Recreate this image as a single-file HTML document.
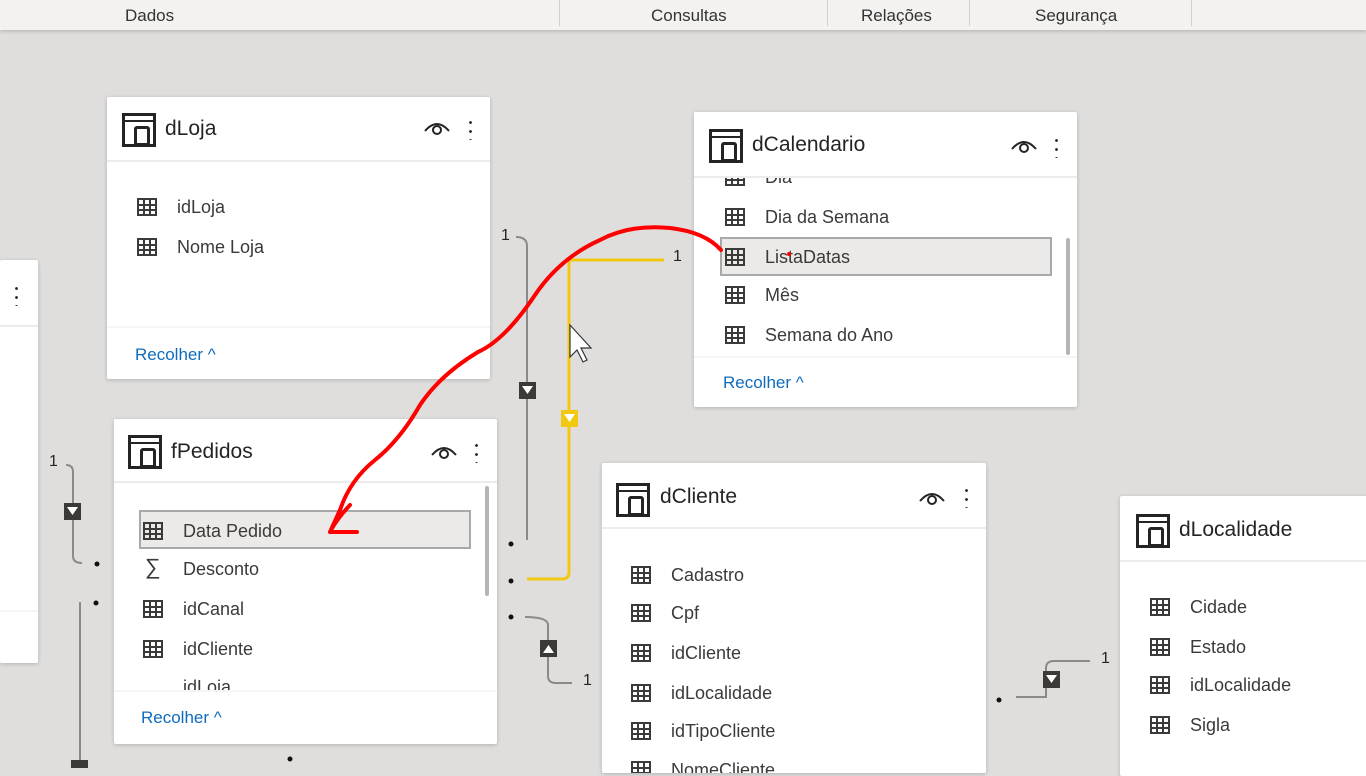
<!DOCTYPE html>
<html><head><meta charset="utf-8"><style>
*{margin:0;padding:0;box-sizing:border-box}
body{width:1366px;height:768px;overflow:hidden;background:#dfdedd;font-family:"Liberation Sans",sans-serif;position:relative}
.top{position:absolute;left:0;top:0;width:1366px;height:30px;background:#f3f2f1;box-shadow:0 2px 3px rgba(0,0,0,.15);font-size:17px;color:#333}
.top span{position:absolute;top:6px}
.top i{position:absolute;top:0;width:1px;height:26px;background:#d0d0d0}
.card{position:absolute;background:#fff;box-shadow:0 1px 4px rgba(0,0,0,.2);border-radius:2px;overflow:hidden}
.hd{position:absolute;left:0;right:0;top:0;border-bottom:2px solid #ececec}
.ti{position:absolute;font-size:21px;color:#252423}
.tic{position:absolute;width:34px;height:34px;border:3px solid #252423}
.tic:before{content:"";position:absolute;left:0;right:0;top:4px;height:2px;background:#252423}
.tic:after{content:"";position:absolute;left:9px;top:10px;width:10px;height:14px;border:3px solid #252423;border-radius:3px 3px 0 0}
.eye{position:absolute;width:26px;height:14px}
.dots{position:absolute;width:3px;height:22px;background:radial-gradient(circle,#252423 1.2px,transparent 1.6px) 0 0/3px 9px repeat-y}
.f{position:absolute;font-size:18px;color:#3b3a39;height:22px;line-height:22px}
.f b{position:absolute;left:-40px;top:2px;width:20px;height:18px;border:2px solid #3b3a39;background:
linear-gradient(#3b3a39,#3b3a39) 4px 0/2px 100% no-repeat,
linear-gradient(#3b3a39,#3b3a39) 0 4px/100% 2px no-repeat,
linear-gradient(#3b3a39,#3b3a39) 0 9px/100% 2px no-repeat,
linear-gradient(#3b3a39,#3b3a39) 10px 0/2px 100% no-repeat}
.sel{position:absolute;background:#ebeae9;border:2px solid #a9a9a9}
.ft{position:absolute;left:0;right:0;border-top:2px solid #f5f5f5}
.rc{position:absolute;font-size:17px;color:#0f6cbd}
.sb{position:absolute;width:4px;background:#b5b5b5;border-radius:2px}
.lbl{position:absolute;font-size:16px;color:#252423}
</style></head><body>
<div class="top">
<span style="left:125px">Dados</span><i style="left:559px"></i>
<span style="left:651px">Consultas</span><i style="left:827px"></i>
<span style="left:861px">Relações</span><i style="left:969px"></i>
<span style="left:1035px">Segurança</span><i style="left:1191px"></i>
</div>

<div class="card" style="left:0;top:260px;width:38px;height:403px">
<div class="hd" style="height:67px"></div>
<div class="dots" style="left:15px;top:24px"></div>
<div class="ft" style="top:350px"></div>
</div>

<svg width="1366" height="768" style="position:absolute;left:0;top:0">
<g fill="none" stroke="#8a8a8a" stroke-width="2">
<path d="M516 237 Q527 237 527 246 V540"/>
<path d="M66 465 Q73 465 73 472 V556 Q73 563 82 563"/>
<path d="M80 602 V768"/>
<path d="M525 617 Q548 617 548 625 V676 Q548 683 556 683 H572"/>
<path d="M1016 697 H1046 V668 Q1046 661 1054 661 H1090"/>
</g>
<path d="M664 260 H569 V572 Q569 579 562 579 H527" fill="none" stroke="#f2c811" stroke-width="3"/>
<rect x="519" y="382" width="17" height="17" fill="#3b3a39"/><path d="M522 386 h11 l-5.5 8z" fill="#fff"/>
<rect x="561" y="410" width="17" height="17" fill="#f2c811"/><path d="M564 414 h11 l-5.5 8z" fill="#fff"/>
<rect x="64" y="503" width="17" height="17" fill="#3b3a39"/><path d="M67 507 h11 l-5.5 8z" fill="#fff"/>
<rect x="540" y="640" width="17" height="17" fill="#3b3a39"/><path d="M543 653 h11 l-5.5 -8z" fill="#fff"/>
<rect x="1043" y="671" width="17" height="17" fill="#3b3a39"/><path d="M1046 675 h11 l-5.5 8z" fill="#fff"/>
<rect x="71" y="760" width="17" height="10" fill="#3b3a39"/>
<g fill="#111"><circle cx="511" cy="544" r="2.5"/><circle cx="511" cy="581" r="2.5"/><circle cx="511" cy="617" r="2.5"/><circle cx="97" cy="564" r="2.5"/><circle cx="96" cy="603" r="2.5"/><circle cx="999" cy="700" r="2.5"/><circle cx="290" cy="759" r="2.5"/></g>
<path d="M570 325 V357 L577 350 L583 362 L587 360 L581 348 L591 348 Z" fill="#fff" stroke="#333" stroke-width="1.2"/>
</svg>
<div class="lbl" style="left:501px;top:227px">1</div>
<div class="lbl" style="left:673px;top:248px">1</div>
<div class="lbl" style="left:49px;top:453px">1</div>
<div class="lbl" style="left:583px;top:672px">1</div>
<div class="lbl" style="left:1101px;top:650px">1</div>

<div class="card" style="left:107px;top:97px;width:383px;height:282px">
<div class="hd" style="height:65px"></div>
<div class="tic" style="left:15px;top:16px"></div>
<div class="ti" style="left:58px;top:20px">dLoja</div>
<svg class="eye" style="left:317px;top:24px" viewBox="0 0 26 14"><path d="M1 10 Q13 -4 25 10" fill="none" stroke="#252423" stroke-width="2"/><circle cx="13" cy="9" r="4" fill="none" stroke="#252423" stroke-width="2"/></svg>
<div class="dots" style="left:362px;top:21px"></div>
<div class="f" style="left:70px;top:99px"><b></b>idLoja</div>
<div class="f" style="left:70px;top:139px"><b></b>Nome Loja</div>
<div class="ft" style="top:229px"></div>
<div class="rc" style="left:28px;top:248px">Recolher ^</div>
</div>

<div class="card" style="left:694px;top:112px;width:383px;height:295px">
<div class="f" style="left:71px;top:54px"><b></b>Dia</div>
<div class="hd" style="height:66px;background:#fff"></div>
<div class="tic" style="left:15px;top:17px"></div>
<div class="ti" style="left:58px;top:21px">dCalendario</div>
<svg class="eye" style="left:317px;top:27px" viewBox="0 0 26 14"><path d="M1 10 Q13 -4 25 10" fill="none" stroke="#252423" stroke-width="2"/><circle cx="13" cy="9" r="4" fill="none" stroke="#252423" stroke-width="2"/></svg>
<div class="dots" style="left:361px;top:24px"></div>
<div class="f" style="left:71px;top:94px"><b></b>Dia da Semana</div>
<div class="sel" style="left:26px;top:125px;width:332px;height:39px"></div>
<div class="f" style="left:71px;top:134px"><b></b>ListaDatas</div>
<div class="f" style="left:71px;top:172px"><b></b>Mês</div>
<div class="f" style="left:71px;top:212px"><b></b>Semana do Ano</div>
<div class="sb" style="left:372px;top:126px;height:117px"></div>
<div class="ft" style="top:244px"></div>
<div class="rc" style="left:29px;top:261px">Recolher ^</div>
</div>

<div class="card" style="left:114px;top:419px;width:383px;height:325px">
<div class="hd" style="height:64px"></div>
<div class="tic" style="left:14px;top:16px"></div>
<div class="ti" style="left:57px;top:21px">fPedidos</div>
<svg class="eye" style="left:317px;top:26px" viewBox="0 0 26 14"><path d="M1 10 Q13 -4 25 10" fill="none" stroke="#252423" stroke-width="2"/><circle cx="13" cy="9" r="4" fill="none" stroke="#252423" stroke-width="2"/></svg>
<div class="dots" style="left:361px;top:22px"></div>
<div class="sel" style="left:25px;top:91px;width:332px;height:39px"></div>
<div class="f" style="left:69px;top:101px"><b></b>Data Pedido</div>
<div class="f" style="left:69px;top:139px"><span style="position:absolute;left:-38px;top:-2px;font-size:22px">∑</span>Desconto</div>
<div class="f" style="left:69px;top:179px"><b></b>idCanal</div>
<div class="f" style="left:69px;top:219px"><b></b>idCliente</div>
<div class="f" style="left:69px;top:257px;height:14px;overflow:hidden"><b></b>idLoja</div>
<div class="sb" style="left:371px;top:67px;height:110px"></div>
<div class="ft" style="top:271px"></div>
<div class="rc" style="left:27px;top:289px">Recolher ^</div>
</div>

<div class="card" style="left:602px;top:463px;width:384px;height:310px">
<div class="hd" style="height:66px"></div>
<div class="tic" style="left:14px;top:20px"></div>
<div class="ti" style="left:58px;top:22px">dCliente</div>
<svg class="eye" style="left:317px;top:28px" viewBox="0 0 26 14"><path d="M1 10 Q13 -4 25 10" fill="none" stroke="#252423" stroke-width="2"/><circle cx="13" cy="9" r="4" fill="none" stroke="#252423" stroke-width="2"/></svg>
<div class="dots" style="left:363px;top:23px"></div>
<div class="f" style="left:69px;top:101px"><b></b>Cadastro</div>
<div class="f" style="left:69px;top:139px"><b></b>Cpf</div>
<div class="f" style="left:69px;top:179px"><b></b>idCliente</div>
<div class="f" style="left:69px;top:219px"><b></b>idLocalidade</div>
<div class="f" style="left:69px;top:257px"><b></b>idTipoCliente</div>
<div class="f" style="left:69px;top:296px"><b></b>NomeCliente</div>
</div>

<div class="card" style="left:1120px;top:496px;width:250px;height:280px">
<div class="hd" style="height:66px"></div>
<div class="tic" style="left:16px;top:18px"></div>
<div class="ti" style="left:59px;top:22px">dLocalidade</div>
<div class="f" style="left:70px;top:100px"><b></b>Cidade</div>
<div class="f" style="left:70px;top:140px"><b></b>Estado</div>
<div class="f" style="left:70px;top:178px"><b></b>idLocalidade</div>
<div class="f" style="left:70px;top:218px"><b></b>Sigla</div>
</div>

<svg width="1366" height="768" style="position:absolute;left:0;top:0">
<path d="M721 250 Q705 232 670 228 Q630 224 600 240 Q560 258 535 295 Q505 340 478 352 Q440 375 420 405 Q400 440 375 460 Q350 480 340 510 L330 532 M330 532 Q336 520 350 505 M330 532 H357" fill="none" stroke="#f00" stroke-width="4" stroke-linecap="round" stroke-linejoin="round"/>
<circle cx="789" cy="254" r="2" fill="#f00"/>
</svg>
</body></html>
